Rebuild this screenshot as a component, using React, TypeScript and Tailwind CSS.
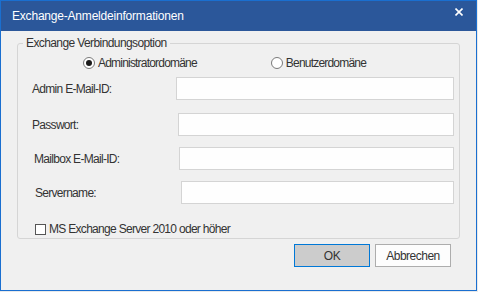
import { useState } from 'react';

const font = "font-['Liberation_Sans',Arial,sans-serif]";

function Field({ label, labelClass }: { label: string; labelClass: string }) {
  return (
    <div className="flex items-center h-[23px]">
      <span className={`${labelClass} shrink-0 text-[12px] tracking-[-0.7px] text-[#333]`}>{label}</span>
      <input className="flex-1 h-[23px] mr-[5px] border border-[#d4d4d4] bg-[#fefefe] outline-none" />
    </div>
  );
}

export default function App() {
  const [domain, setDomain] = useState<'admin' | 'user'>('admin');
  const [legacy, setLegacy] = useState(false);

  return (
    <div className={`w-[478px] h-[292px] bg-[#e9e9e9] ${font}`}>
      <div className="w-[477px] h-[291px] flex flex-col border border-[#1a6fd0] bg-[#f0f0f0]">
        {/* Title bar */}
        <div className="h-[30px] shrink-0 flex items-center justify-between bg-[#2b579a] pl-[11px] pr-[13px]">
          <span className="text-[12px] tracking-[-0.2px] text-white">Exchange-Anmeldeinformationen</span>
          <svg width="8" height="8" viewBox="0 0 8 8" className="mb-[8px]">
            <path d="M0.5 0.5L7.5 7.5M7.5 0.5L0.5 7.5" stroke="white" strokeWidth="1.6" />
          </svg>
        </div>

        {/* Group box */}
        <fieldset className="mt-[4px] ml-[16px] w-[443px] h-[204px] shrink-0 border border-[#d5d5d5] rounded-[3px] px-0 pb-0">
          <legend className="ml-[5px] px-[3px] text-[12px] tracking-[-0.6px] text-[#333] leading-[16px]">
            Exchange Verbindungsoption
          </legend>

          <div className="flex items-center h-[14px] mt-[5px] text-[12px] tracking-[-0.8px] text-[#333]">
            <label className="flex items-center ml-[65px] cursor-default" onClick={() => setDomain('admin')}>
              <span className="w-[12px] h-[12px] rounded-full border border-[#7a7a7a] bg-white flex items-center justify-center">
                {domain === 'admin' && <span className="w-[6px] h-[6px] rounded-full bg-[#1a1a1a]" />}
              </span>
              <span className="ml-[3px]">Administratordomäne</span>
            </label>
            <label className="flex items-center ml-[74px] cursor-default" onClick={() => setDomain('user')}>
              <span className="w-[12px] h-[12px] rounded-full border border-[#7a7a7a] bg-white flex items-center justify-center">
                {domain === 'user' && <span className="w-[6px] h-[6px] rounded-full bg-[#1a1a1a]" />}
              </span>
              <span className="ml-[3px]">Benutzerdomäne</span>
            </label>
          </div>

          <div className="flex flex-col mt-[7px]">
            <Field label="Admin E-Mail-ID:" labelClass="ml-[14px] w-[144px]" />
            <div className="mt-[13px]">
              <Field label="Passwort:" labelClass="ml-[14px] w-[146px]" />
            </div>
            <div className="mt-[11px]">
              <Field label="Mailbox E-Mail-ID:" labelClass="ml-[16px] w-[145px]" />
            </div>
            <div className="mt-[11px]">
              <Field label="Servername:" labelClass="ml-[17px] w-[146px]" />
            </div>
          </div>

          <label
            className="flex items-center mt-[16px] ml-[17px] text-[12px] tracking-[-0.7px] text-[#333] cursor-default"
            onClick={() => setLegacy(!legacy)}
          >
            <span className="w-[11px] h-[11px] border border-[#555] bg-white flex items-center justify-center text-[9px] leading-none">
              {legacy ? '✓' : ''}
            </span>
            <span className="ml-[3px]">MS Exchange Server 2010 oder höher</span>
          </label>
        </fieldset>

        {/* Buttons */}
        <div className="flex justify-end gap-[5px] mt-[5px] mr-[25px]">
          <button className="w-[76px] h-[23px] border border-[#0078d7] bg-[#cccccc] text-[12px] tracking-[-0.5px] text-[#333]">
            OK
          </button>
          <button className="w-[76px] h-[23px] border border-[#adadad] bg-[#fdfdfd] text-[12px] tracking-[-0.5px] text-[#333]">
            Abbrechen
          </button>
        </div>
      </div>
    </div>
  );
}
